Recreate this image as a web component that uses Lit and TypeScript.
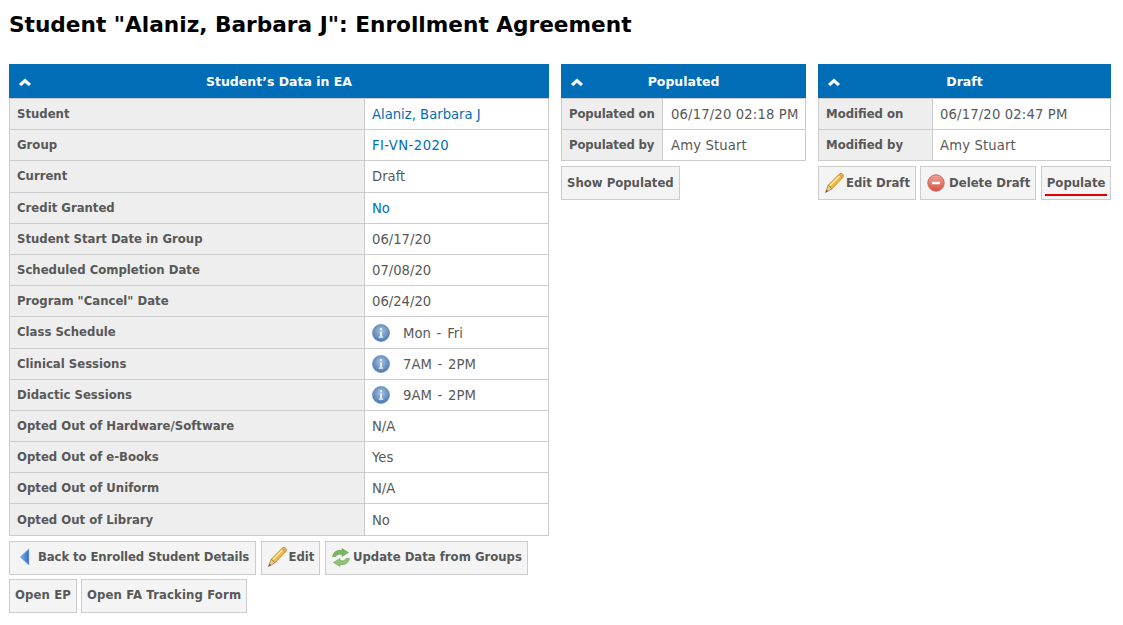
import { LitElement, html, css, svg } from "lit";
import { customElement } from "lit/decorators.js";

const pencil = html`<svg class="ic pen" width="21" height="22" viewBox="0 0 21 22">
  <path d="M4.200 13.200 15.200 2.200c1.100-1.100 2.400-1 3.400 0s1.100 2.300 0 3.400L8 16.800z" fill="#f0b93f" stroke="#bd8526" stroke-width=".9"/>
  <path d="M6 13.500 15.800 3.800" stroke="#fbe9a0" stroke-width="1.500" fill="none"/>
  <path d="M15 2.400 18.800 6" stroke="#e39a58" stroke-width="1.500" fill="none"/>
  <path d="M4.200 13.200 1.500 20.500 8 16.800z" fill="#eccb9a" stroke="#a9773e" stroke-width=".8"/>
  <path d="M2.500 17.900 1.500 20.500l2.700-1.400z" fill="#6b4a2a"/>
</svg>`;
const minus = html`<svg class="ic del" width="18" height="18" viewBox="0 0 18 18">
  <defs><linearGradient id="r" x1="0" y1="0" x2="0" y2="1"><stop offset="0" stop-color="#f0a49a"/><stop offset="1" stop-color="#d9503f"/></linearGradient></defs>
  <circle cx="9" cy="9" r="8.200" fill="url(#r)" stroke="#c9675c"/>
  <rect x="5" y="7.700" width="8" height="2.600" rx=".5" fill="#fff"/>
</svg>`;
const refresh = html`<svg class="ic ref" width="20" height="19" viewBox="0 0 20 19">
  <path d="M1.500 8.500C2.500 3.500 7 1.500 11 2.700V.6l6.500 4-6.500 4V6.500C8 5.700 6 6.400 5 8.500z" fill="#79b85f" stroke="#5c9a48" stroke-width=".5"/>
  <path d="M18.500 10.500c-1 5-5.500 7-9.500 5.800v2.100l-6.500-4 6.500-4v2.100c3 .8 5 .1 6-2z" fill="#8cc474" stroke="#5c9a48" stroke-width=".5"/>
</svg>`;
const back = html`<svg class="ic bk" width="11" height="18" viewBox="0 0 11 18">
  <defs><linearGradient id="a" x1="0" y1="0" x2="1" y2="0"><stop offset="0" stop-color="#7fb0ea"/><stop offset="1" stop-color="#2f6fc9"/></linearGradient></defs>
  <path d="M10 .8v16.400L1 9z" fill="url(#a)" stroke="#9dbde8" stroke-width=".5"/>
</svg>`;
const info = html`<svg class="info" width="18" height="18" viewBox="0 0 18 18">
  <defs><radialGradient id="b" cx=".5" cy=".38" r=".65"><stop offset="0" stop-color="#a9c3e2"/><stop offset="1" stop-color="#4474ae"/></radialGradient></defs>
  <circle cx="9" cy="9" r="8.500" fill="url(#b)" stroke="#5f86b8" stroke-width=".7"/>
  <rect x="8" y="4" width="2" height="2" fill="#e6eef7"/>
  <rect x="8" y="7.500" width="2" height="5" fill="#e6eef7"/>
  <rect x="6.800" y="12.400" width="4.400" height="1.400" fill="#e6eef7"/>
</svg>`;
const chev = svg`<path d="M.8 7 6.500 1.800 12.200 7 10.200 8.800 6.500 5.500 2.800 8.800z" fill="#fff" stroke="#fff" stroke-width=".6"/>`;

type Row = [string, string, string?];
const rows: Row[] = [
  ["Student", "Alaniz, Barbara J", "link"],
  ["Group", "FI-VN-2020", "link wide"],
  ["Current", "Draft"],
  ["Credit Granted", "No", "link"],
  ["Student Start Date in Group", "06/17/20"],
  ["Scheduled Completion Date", "07/08/20"],
  ['Program "Cancel" Date', "06/24/20"],
  ["Class Schedule", "Mon\u00a0 -\u00a0 Fri", "info"],
  ["Clinical Sessions", "7AM\u00a0 -\u00a0 2PM", "info"],
  ["Didactic Sessions", "9AM\u00a0 -\u00a0 2PM", "info"],
  ["Opted Out of Hardware/Software", "N/A"],
  ["Opted Out of e-Books", "Yes"],
  ["Opted Out of Uniform", "N/A"],
  ["Opted Out of Library", "No"],
];

@customElement("app-root")
export class AppRoot extends LitElement {
  static styles = css`
    :host { display: block; font-family: "DejaVu Sans", Verdana, sans-serif; font-size: 12px; color: #585858; background: #fff; height: 625px; overflow: hidden; }
    h1 { margin: 0; padding: 11px 0 0 9px; height: 64px; box-sizing: border-box; font-size: 21.650px; line-height: 28px; font-weight: 700; color: #000; }
    .cols { display: flex; align-items: flex-start; gap: 12px; padding-left: 9px; }
    .col { flex: none; }
    .c1 { width: 540px; }
    .c2 { width: 245px; }
    .c3 { width: 293px; }
    .head { position: relative; height: 34px; background: #006db6; color: #fff; font-weight: 700; font-size: 12.500px; line-height: 35px; text-align: center; }
    .head svg { position: absolute; left: 9px; top: 13px; }
    table { width: 100%; border-collapse: collapse; table-layout: fixed; }
    td { border: 1px solid #ccc; padding: 0 7px; height: 31.2px; box-sizing: border-box; white-space: nowrap; vertical-align: middle; line-height: 16px; }
    td.l { background: #eee; font-weight: 700; font-size: 11.700px; padding-bottom: 0; }
    td.v { background: #fff; padding-top: 2px; font-size: 13.200px; }
    td.link { color: #006db6; }
    td.wide { letter-spacing: .45px; }
    td.info { word-spacing: -1.300px; }
    .c2 td.v, .c3 td.v { letter-spacing: .15px; }
    .c2 td.v { padding-left: 8px; }
    .c2 td.l { letter-spacing: -.15px; }
    .c1 col.a { width: 355px; }
    .c2 col.a { width: 101px; }
    .c3 col.a { width: 114px; }
    .info { vertical-align: middle; margin-right: 13px; margin-top: -1px; }
    .btns { display: flex; flex-wrap: wrap; margin-top: 5px; gap: 4px 4.500px; }
    .btns.fit { flex-wrap: nowrap; gap: 4px; }
    .btn { box-sizing: border-box; height: 34px; display: inline-flex; align-items: center; padding: 0 5px 1px; border: 1px solid #ccc; background: #f4f4f4; color: #585858; font-weight: 700; font-size: 11.700px; white-space: nowrap; position: relative; }
    .btn.wide { letter-spacing: .12px; }
    .btn.tight { margin-right: -.5px; }
    .ic { flex: none; }
    .pen { margin-right: 1px; }
    .del { margin: 0 4px 0 1px; }
    .ref { margin-right: 2px; }
    .ulined { margin-left: auto; padding: 0 4.500px 1px; }
    .ulined::after { content: ""; position: absolute; left: 3px; right: 3px; bottom: 3px; height: 2px; background: #e00000; }
    .b-back { width: 247px; padding-left: 9px; letter-spacing: -.1px; }
    .bk { margin-right: 8px; }
  `;

  kv(items: Row[]) {
    return html`<table>
      <colgroup><col class="a" /><col /></colgroup>
      ${items.map(([k, v, t]) => html`<tr>
        <td class="l">${k}</td>
        <td class="v ${t ?? ""}">${t === "info" ? info : ""}${v}</td>
      </tr>`)}
    </table>`;
  }

  head(title: string) {
    return html`<div class="head"><svg width="14" height="10" viewBox="0 0 13 10">${chev}</svg>${title}</div>`;
  }

  render() {
    return html`
      <h1>Student "Alaniz, Barbara J": Enrollment Agreement</h1>
      <div class="cols">
        <div class="col c1">
          ${this.head("Student’s Data in EA")}
          ${this.kv(rows)}
          <div class="btns">
            <div class="btn b-back">${back}Back to Enrolled Student Details</div>
            <div class="btn">${pencil}Edit</div>
            <div class="btn">${refresh}Update Data from Groups</div>
            <div class="btn wide tight">Open EP</div>
            <div class="btn wide">Open FA Tracking Form</div>
          </div>
        </div>
        <div class="col c2">
          ${this.head("Populated")}
          ${this.kv([["Populated on", "06/17/20 02:18 PM"], ["Populated by", "Amy Stuart"]])}
          <div class="btns"><div class="btn">Show Populated</div></div>
        </div>
        <div class="col c3">
          ${this.head("Draft")}
          ${this.kv([["Modified on", "06/17/20 02:47 PM"], ["Modified by", "Amy Stuart"]])}
          <div class="btns fit">
            <div class="btn">${pencil}Edit Draft</div>
            <div class="btn">${minus}Delete Draft</div>
            <div class="btn ulined">Populate</div>
          </div>
        </div>
      </div>
    `;
  }
}
